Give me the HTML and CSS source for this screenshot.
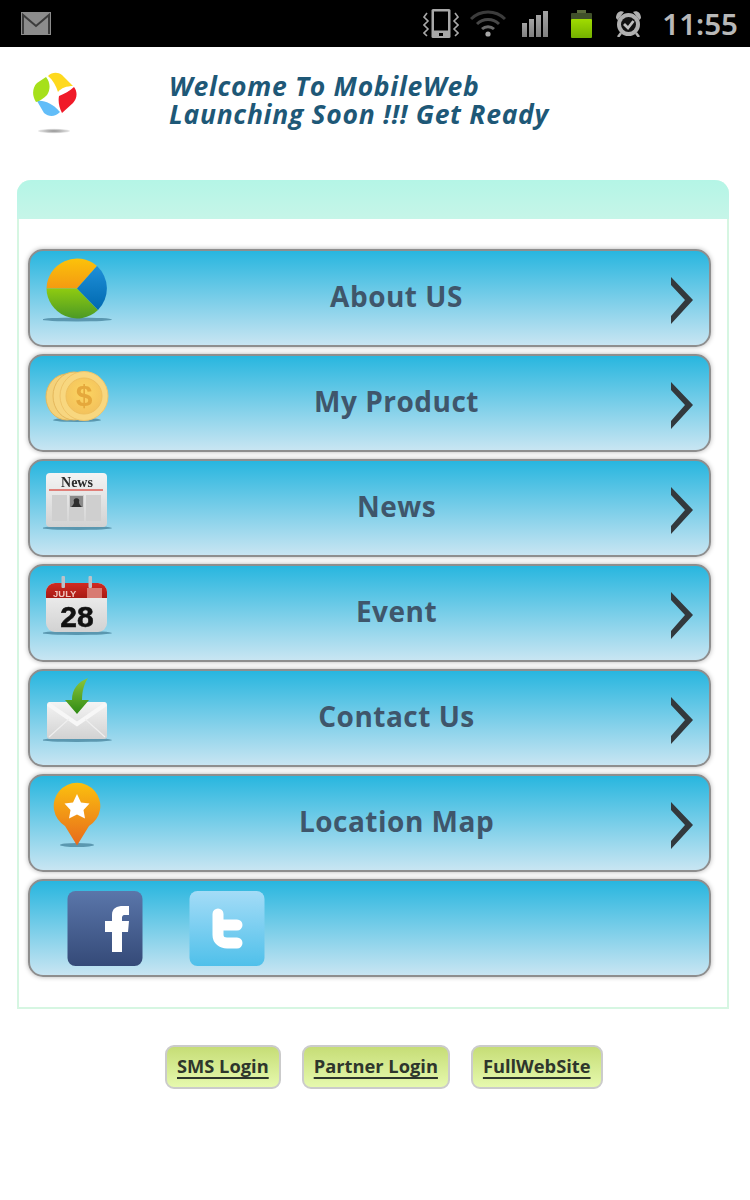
FILE: index.html
```html
<!DOCTYPE html>
<html lang="en">
<head>
<meta charset="utf-8">
<title>MobileWeb</title>
<link rel="stylesheet" href="styles.css">
</head>
<body>
<svg class="defs" width="0" height="0" aria-hidden="true">
  <defs>
    <linearGradient id="gOrange" x1="0" y1="0" x2="0" y2="1"><stop offset="0" stop-color="#fcc20a"/><stop offset="1" stop-color="#f49a12"/></linearGradient>
    <linearGradient id="gGreen" x1="0" y1="0" x2="0" y2="1"><stop offset="0" stop-color="#8fcb10"/><stop offset="1" stop-color="#4c9a25"/></linearGradient>
    <linearGradient id="gBlue" x1="0" y1="0" x2="0" y2="1"><stop offset="0" stop-color="#1f8fd8"/><stop offset="1" stop-color="#0069b0"/></linearGradient>
    <radialGradient id="gCoin" cx=".5" cy=".4" r=".6"><stop offset="0" stop-color="#fcd561"/><stop offset="1" stop-color="#f3c25c"/></radialGradient>
    <radialGradient id="gLogoShadow"><stop offset="0" stop-color="#8f8f8f"/><stop offset="1" stop-color="#e8e8e8"/></radialGradient>
    <linearGradient id="gPaper" x1="0" y1="0" x2="0" y2="1"><stop offset="0" stop-color="#f4f4f4"/><stop offset="1" stop-color="#d2d2d2"/></linearGradient>
    <linearGradient id="gRed" x1="0" y1="0" x2="0" y2="1"><stop offset="0" stop-color="#d02b22"/><stop offset="1" stop-color="#a81a14"/></linearGradient>
    <linearGradient id="gPin" x1="0" y1="0" x2="0" y2="1"><stop offset="0" stop-color="#fbc00f"/><stop offset="1" stop-color="#e86a1c"/></linearGradient>
    <linearGradient id="gArrow" x1="0" y1="0" x2="0" y2="1"><stop offset="0" stop-color="#8cc63a"/><stop offset="1" stop-color="#2f8a14"/></linearGradient>
    <linearGradient id="gBat" x1="0" y1="0" x2="0" y2="1"><stop offset="0" stop-color="#a0dc00"/><stop offset="1" stop-color="#74b000"/></linearGradient>
    <linearGradient id="gBar" x1="0" y1="0" x2="0" y2="1"><stop offset="0" stop-color="#a4a4a4"/><stop offset="1" stop-color="#808080"/></linearGradient>
    <linearGradient id="gFb" x1="0" y1="0" x2="0" y2="1"><stop offset="0" stop-color="#5a76aa"/><stop offset="1" stop-color="#354a78"/></linearGradient>
    <linearGradient id="gTw" x1="0" y1="0" x2="0" y2="1"><stop offset="0" stop-color="#a4dcf7"/><stop offset="1" stop-color="#4fc0ea"/></linearGradient>
    <symbol id="chev" viewBox="0 0 26 48"><path d="M2 0 L24 23 L2 47 V39 L16 23 L2 8 Z" fill="#33393d"/></symbol>
  </defs>
</svg>

<div class="status">
  <svg class="s-mail" width="30" height="23" viewBox="0 0 30 23"><rect width="30" height="23" fill="#8c8c8c"/><path d="M2 22 V3 L15 14 L28 3 V22" fill="none" stroke="#3c3c3c" stroke-width="2"/></svg>
  <div class="status-right">
    <svg class="s-ic" width="36" height="29" viewBox="0 0 36 29"><rect x="8.5" y="0" width="19" height="29" rx="1.5" fill="#a8a8a8"/><rect x="11" y="2.5" width="14" height="19" fill="#000"/><rect x="16" y="24" width="4" height="3" fill="#000"/><path d="M4 4 L1 8 L5 12 L1 16 L5 20 L1 24 L4 27 M32 4 L35 8 L31 12 L35 16 L31 20 L35 24 L32 27" fill="none" stroke="#a8a8a8" stroke-width="1.6"/></svg>
    <svg class="s-ic s-wifi" width="36" height="27" viewBox="0 0 36 27"><path d="M1 9 A24 24 0 0 1 35 9" fill="none" stroke="#3c3c3c" stroke-width="3"/><path d="M7 14 A16 16 0 0 1 29 14" fill="none" stroke="#484848" stroke-width="3"/><path d="M12 19 A9 9 0 0 1 24 19" fill="none" stroke="#6a6a6a" stroke-width="3"/><circle cx="18" cy="24" r="2.6" fill="#a8a8a8"/></svg>
    <svg class="s-ic s-signal" width="26" height="26" viewBox="0 0 26 26"><rect y="12" width="5" height="14" fill="url(#gBar)"/><rect x="7" y="8" width="5" height="18" fill="url(#gBar)"/><rect x="14" y="4" width="5" height="22" fill="url(#gBar)"/><rect x="21" width="5" height="26" fill="url(#gBar)"/></svg>
    <svg class="s-ic s-bat" width="23" height="28" viewBox="0 0 23 28"><rect x="7" y="0" width="9" height="3" fill="#5a6a3a"/><rect x="1" y="3" width="21" height="7" rx="1" fill="#40502a"/><rect x="1" y="9" width="21" height="19" rx="1" fill="url(#gBat)"/></svg>
    <svg class="s-ic s-alarm" width="27" height="27" viewBox="0 0 27 27"><path d="M1 8 C1 3 5 0 9 2 L2.5 10 Z M26 8 C26 3 22 0 18 2 L24.5 10 Z" fill="#b0b0b0"/><circle cx="13.5" cy="14.5" r="11.5" fill="#b0b0b0"/><circle cx="13.5" cy="14.5" r="7.5" fill="#111"/><path d="M9 14 L13 18 L18.5 11" fill="none" stroke="#c0c0c0" stroke-width="2.8"/><path d="M6 23 L3 27 M21 23 L24 27" stroke="#b0b0b0" stroke-width="2.5"/></svg>
    <span class="clock">11:55</span>
  </div>
</div>

<header class="top">
  <svg class="logo" width="60" height="76" viewBox="0 0 60 76">
    <path d="M23 9 C27 5 33 5 37 8 L48 19 C42 19 36 21 33 25 C31 19 28 13 23 9Z" fill="#fed91e"/>
    <path d="M49 20 C53 25 52 32 48 36 L37 46 C34 40 33 34 34 29 C39 27 45 24 49 20Z" fill="#f01a28"/>
    <path d="M12 34 C19 33 27 36 35 45 C30 50 24 50 19 46 Z" fill="#62bdf8"/>
    <path d="M21 10 C25 15 26 22 22 28 C19 31 15 34 11 35 C7 29 7 21 12 16 Z" fill="#a6e01a"/>
    <ellipse cx="29" cy="64" rx="16" ry="2.2" fill="url(#gLogoShadow)"/>
  </svg>
  <h1 class="welcome">Welcome To MobileWeb<br>Launching Soon !!! Get Ready</h1>
</header>

<main class="panel">
  <div class="panel-head"></div>
  <div class="rows">
    <a class="row">
      <svg class="ico" width="70" height="70" viewBox="0 0 70 70">
        <ellipse cx="34" cy="64.5" rx="35" ry="2" fill="#3f7c96" opacity=".7"/>
        <path d="M34 33.5 L3.5 33.5 A30.5 30.5 0 0 1 54 11 Z" fill="url(#gOrange)"/>
        <path d="M34 33.5 L3.5 33.5 A30.5 30.5 0 0 0 55 55 Z" fill="url(#gGreen)"/>
        <path d="M34 33.5 L54 11 A30.5 30.5 0 0 1 55 55 Z" fill="url(#gBlue)"/>
      </svg>
      <span class="label">About US</span>
      <svg class="chev" width="26" height="48"><use href="#chev"/></svg>
    </a>
    <a class="row">
      <svg class="ico" width="70" height="70" viewBox="0 0 70 70">
        <ellipse cx="34" cy="60" rx="24" ry="2" fill="#3f7c96" opacity=".7"/>
        <ellipse cx="24" cy="37" rx="21" ry="23" fill="#f4d27a" stroke="#e5b85c"/>
        <ellipse cx="31" cy="36" rx="21" ry="24" fill="#f7d680" stroke="#e5b85c"/>
        <ellipse cx="41" cy="36" rx="24" ry="24.5" fill="#f8d77f" stroke="#efc468"/>
        <circle cx="41" cy="36" r="18" fill="url(#gCoin)" stroke="#efc05c"/>
        <text class="dollar" x="41" y="46" text-anchor="middle">$</text>
      </svg>
      <span class="label">My Product</span>
      <svg class="chev" width="26" height="48"><use href="#chev"/></svg>
    </a>
    <a class="row">
      <svg class="ico" width="70" height="70" viewBox="0 0 70 70">
        <ellipse cx="34" cy="63" rx="35" ry="2" fill="#3f7c96" opacity=".7"/>
        <rect x="3" y="8" width="61" height="54" rx="4" fill="url(#gPaper)"/>
        <text class="news" x="34" y="22" text-anchor="middle">News</text>
        <rect x="6" y="24" width="54" height="2" fill="#e0807a"/>
        <rect x="9" y="30" width="15" height="26" fill="#cfcfcf"/>
        <rect x="26" y="30" width="15" height="26" fill="#cfcfcf"/>
        <rect x="43" y="30" width="15" height="26" fill="#cfcfcf"/>
        <rect x="27" y="31" width="13" height="11" fill="#8a8a8a"/>
        <path d="M28 42 C30 40 31 39 31 37 C29 32 38 32 36 37 C36 39 37 40 39 42 Z" fill="#2f2f2f"/>
      </svg>
      <span class="label">News</span>
      <svg class="chev" width="26" height="48"><use href="#chev"/></svg>
    </a>
    <a class="row">
      <svg class="ico" width="70" height="70" viewBox="0 0 70 70">
        <ellipse cx="34" cy="63" rx="35" ry="2" fill="#3f7c96" opacity=".7"/>
        <rect x="3" y="13" width="61" height="49" rx="9" fill="url(#gPaper)"/>
        <path d="M3 28 V22 A9 9 0 0 1 12 13 H55 A9 9 0 0 1 64 22 V28 Z" fill="url(#gRed)"/>
        <rect x="18.5" y="6" width="3.5" height="12" rx="1" fill="#bcc2c8"/>
        <rect x="45.5" y="6" width="3.5" height="12" rx="1" fill="#bcc2c8"/>
        <rect x="44" y="18" width="15" height="10" fill="#d87a72"/>
        <text class="july" x="10" y="27">JULY</text>
        <text class="day" x="34" y="57" text-anchor="middle">28</text>
      </svg>
      <span class="label">Event</span>
      <svg class="chev" width="26" height="48"><use href="#chev"/></svg>
    </a>
    <a class="row">
      <svg class="ico" width="70" height="70" viewBox="0 0 70 70">
        <ellipse cx="34" cy="65" rx="35" ry="2" fill="#3f7c96" opacity=".7"/>
        <rect x="4" y="27" width="60" height="37" rx="3" fill="url(#gPaper)"/>
        <path d="M5 29 L34 49 L63 29" fill="none" stroke="#f7f7f7" stroke-width="4"/>
        <path d="M6 62 L26 44 M62 62 L42 44" stroke="#efefef" stroke-width="1.2"/>
        <path d="M45 3 C35 7 29 14 29 25 H22 L34 39 L46 25 H39 C39 16 41 9 45 3 Z" fill="url(#gArrow)"/>
      </svg>
      <span class="label">Contact Us</span>
      <svg class="chev" width="26" height="48"><use href="#chev"/></svg>
    </a>
    <a class="row">
      <svg class="ico" width="70" height="70" viewBox="0 0 70 70">
        <ellipse cx="34" cy="65" rx="17" ry="2" fill="#3f7c96" opacity=".7"/>
        <path d="M34 65.5 L22 46 A23.3 23.3 0 1 1 46 46 Z" fill="url(#gPin)"/>
        <path d="M34 14 L38 22.5 L46.5 23.5 L40.5 30 L42 38.5 L34 34.5 L26 38.5 L27.5 30 L21.5 23.5 L30 22.5 Z" fill="#fff"/>
      </svg>
      <span class="label">Location Map</span>
      <svg class="chev" width="26" height="48"><use href="#chev"/></svg>
    </a>
    <div class="row row-social">
      <svg class="soc" width="76" height="76" viewBox="0 0 76 76"><rect x=".5" width="75" height="75" rx="8" fill="url(#gFb)"/><path d="M45 61 V41 H38 V30 H45 V24 C45 17 50 15 56 15 H62 V24 H58 C55 24 55 26 55 28 V30 H62 L61 41 H55 V61 Z" fill="#fff"/></svg>
      <svg class="soc" width="76" height="76" viewBox="0 0 76 76"><rect x=".5" width="75" height="75" rx="8" fill="url(#gTw)"/><path d="M29 23 V44 C29 49 33 52 38 52 H48 M29 34 H48" fill="none" stroke="#fff" stroke-width="11" stroke-linecap="round"/></svg>
    </div>
  </div>
</main>

<nav class="links">
  <a class="btn">SMS Login</a>
  <a class="btn">Partner Login</a>
  <a class="btn">FullWebSite</a>
</nav>
</body>
</html>
```

FILE: styles.css
```css
* { box-sizing: border-box; }
html, body { margin: 0; padding: 0; background: #fff; }
body { width: 750px; height: 1200px; overflow: hidden; font-family: "Open Sans", "Noto Sans", sans-serif; }
.defs { display: block; height: 0; }

.status { height: 47px; background: #000; display: flex; align-items: center; justify-content: space-between; padding: 0 12px 0 21px; }
.s-mail { margin-top: -1px; filter: blur(.4px); }
.status-right { display: flex; align-items: center; }
.s-ic { flex: none; filter: blur(.4px); }
.s-wifi { margin-left: 11px; }
.s-signal { margin-left: 16px; }
.s-bat { margin-left: 22px; }
.s-alarm { margin-left: 22px; }
.clock { color: #b8b8b8; font-size: 29.5px; font-weight: 600; line-height: 47px; margin-left: 20px; font-family: "Noto Sans", sans-serif; }

.top { height: 133px; display: flex; align-items: flex-start; padding: 20px 0 0 25px; }
.logo { flex: none; filter: blur(.5px); }
.welcome { margin: 5px 0 0 84px; color: #1e5877; font-size: 26.5px; line-height: 28px; letter-spacing: .72px; font-style: italic; font-weight: 700; white-space: nowrap; }

.panel { margin: 0 21px 0 17px; height: 829px; border: 2px solid #d6f6e2; border-top: 0; border-radius: 14px 14px 0 0; }
.panel-head { height: 39px; margin: 0 -2px; border-radius: 14px 14px 0 0; background: linear-gradient(#b4f5e6, #c6f5e8); }
.rows { display: flex; flex-direction: column; gap: 7px; padding: 30px 16px 0 9px; }

.row { height: 98px; display: flex; align-items: flex-start; padding: 4px 14px 0 13px; border: 2px solid #8e8e8e; border-radius: 15px; background: linear-gradient(#28b6df, #c8e5f2); box-shadow: 0 0 5px #b4b4b4; }
.ico { flex: none; filter: blur(.5px); }
.label { flex: 1; text-align: center; padding: 22px 0 0 11px; color: #3f566b; font-size: 28px; line-height: 38px; letter-spacing: .5px; font-weight: 700; white-space: nowrap; }
.chev { flex: none; margin-top: 22px; filter: blur(.4px); }
.row-social { padding: 10px 0 0 37px; gap: 46px; }
.soc { flex: none; filter: blur(.4px); }

.dollar { font: 700 30px "Liberation Sans", sans-serif; fill: #e5a83c; }
.news { font: 700 14px "Liberation Serif", serif; fill: #2a2a2a; }
.july { font: 700 9.5px "Liberation Sans", sans-serif; fill: #f0c4bc; }
.day { font: 700 30px "Liberation Sans", sans-serif; fill: #111; stroke: #111; stroke-width: .6px; }

.links { display: flex; gap: 21px; padding: 36px 0 0 165px; }
.btn { height: 44px; padding: 0 10px 3px; display: flex; align-items: center; border: 2px solid #cbcbcb; border-radius: 9px; background: linear-gradient(#c6dd76, #e6f9ae); color: #2e362c; font-size: 18.3px; font-weight: 700; text-decoration: underline; text-decoration-thickness: 2px; text-underline-offset: 4px; white-space: nowrap; }
```
